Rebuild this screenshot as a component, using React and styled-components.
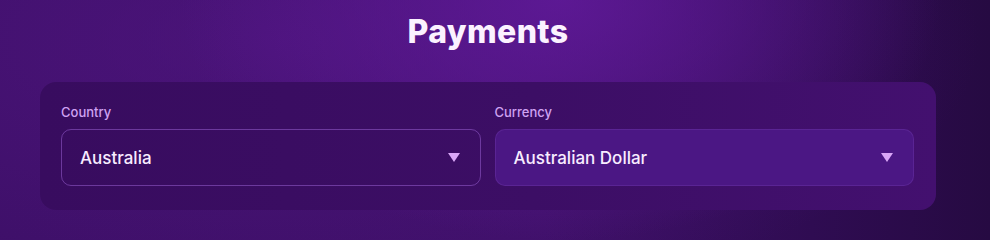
import React from 'react';
import styled, {createGlobalStyle} from 'styled-components';

const GlobalStyle = createGlobalStyle`
    html, body {
        margin: 0;
        padding: 0;
        width: 990px;
        overflow: hidden;
        background: #350c5a;
    }
    body {
        font-family: Inter, "Noto Sans", sans-serif;
    }
`;

const Page = styled.div`
    width: 990px;
    min-height: 100vh;
    box-sizing: border-box;
    padding: 8px 54px 0 40px;
    background:
        radial-gradient(ellipse 380px 240px at 560px 0px, rgba(98, 26, 156, 0.8), rgba(98, 26, 156, 0) 100%),
        radial-gradient(ellipse 700px 280px at 280px 40px, rgba(82, 22, 132, 0.65), rgba(82, 22, 132, 0) 100%),
        linear-gradient(90deg, #3c0f66 0%, #3e1068 55%, #2f0c52 82%, #260a42 100%);
`;

const Title = styled.h1`
    margin: 0 0 27px;
    text-align: center;
    font-family: Inter, sans-serif;
    font-weight: 800;
    font-size: 32px;
    line-height: 47px;
    letter-spacing: 0.4px;
    color: #fbf2ff;
`;

const Card = styled.div`
    display: grid;
    grid-template-columns: 1fr 1fr;
    gap: 14px;
    padding: 22px 22px 24px 21px;
    border-radius: 16px;
    background: linear-gradient(90deg, #380c5f 0%, #3c0e65 55%, #43106f 100%);
`;

const Field = styled.div`
    display: flex;
    flex-direction: column;
    gap: 9px;
`;

const Label = styled.label`
    font-size: 13px;
    font-weight: 500;
    line-height: 16px;
    color: #cfa2f2;
`;

const Select = styled.div`
    display: flex;
    align-items: center;
    justify-content: space-between;
    height: 57px;
    box-sizing: border-box;
    padding: 0 20px 0 18px;
    border-radius: 10px;
    border: 1px solid ${props => props.$filled ? 'rgba(160, 100, 220, 0.18)' : 'rgba(170, 110, 230, 0.45)'};
    background: ${props => props.$filled ? '#4b1784' : 'transparent'};
    color: #f8ecff;
    font-size: 17px;
    font-weight: 500;
`;

const Arrow = styled.span`
    width: 0;
    height: 0;
    border-left: 6px solid transparent;
    border-right: 6px solid transparent;
    border-top: 9px solid #d9a6f7;
`;

function Dropdown({label, value, filled}) {
    return (
        <Field>
            <Label>{label}</Label>
            <Select $filled={filled}>
                <span>{value}</span>
                <Arrow/>
            </Select>
        </Field>
    );
}

export default function App() {
    return (
        <>
            <GlobalStyle/>
            <Page>
                <Title>Payments</Title>
                <Card>
                    <Dropdown label="Country" value="Australia"/>
                    <Dropdown label="Currency" value="Australian Dollar" filled/>
                </Card>
            </Page>
        </>
    );
}
